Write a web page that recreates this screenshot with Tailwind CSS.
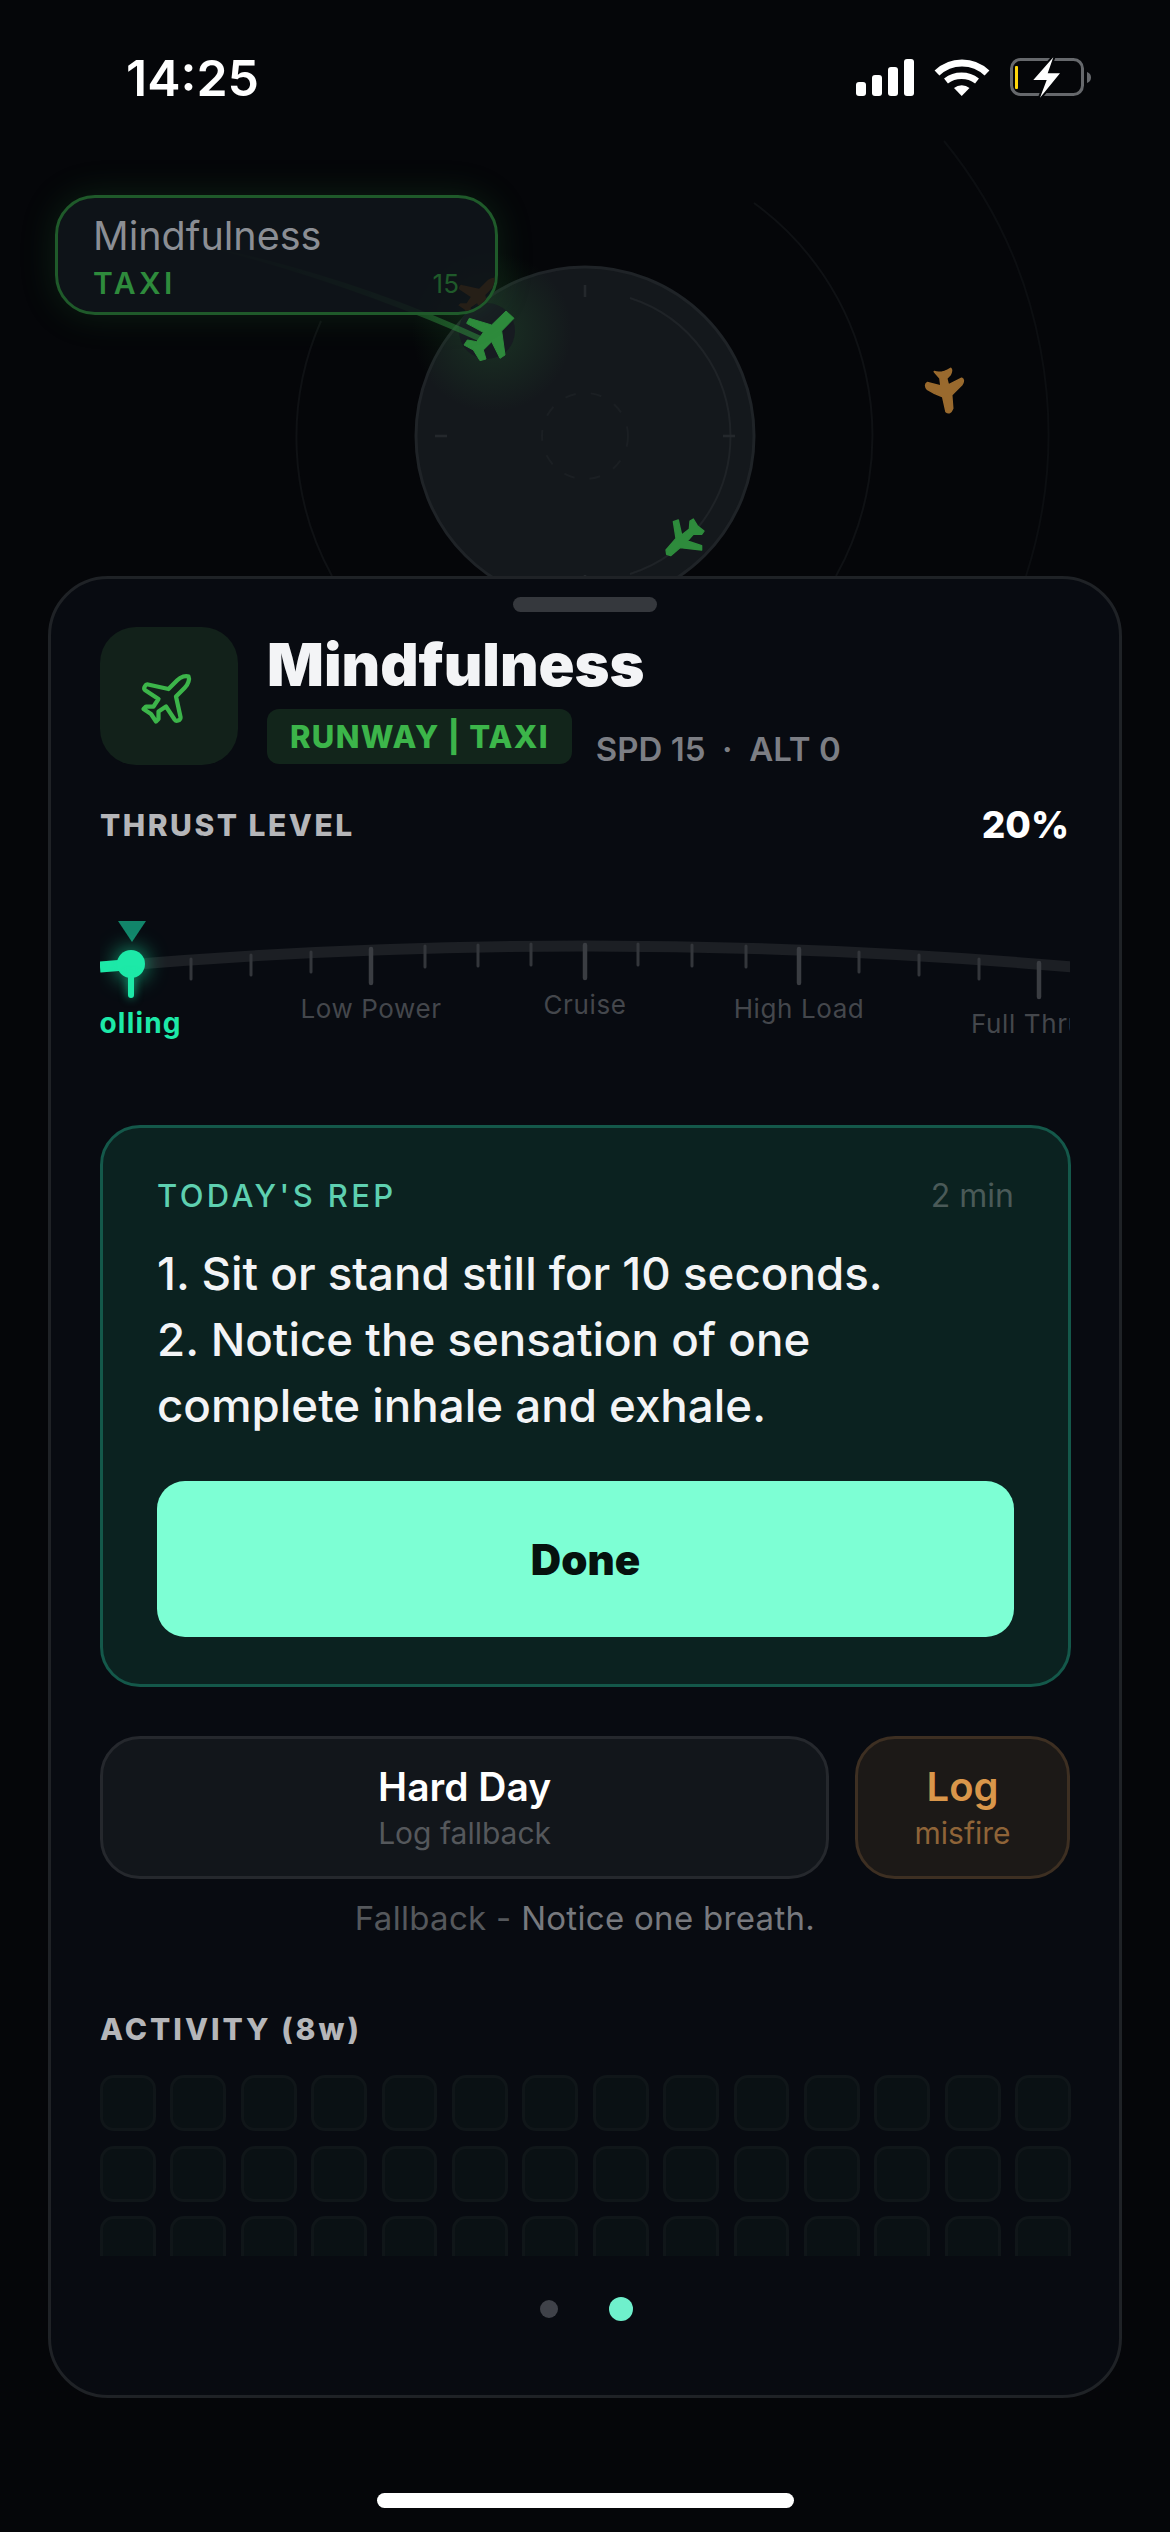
<!DOCTYPE html>
<html lang="en">
<head>
    <meta charset="UTF-8" />
    <meta name="viewport" content="width=device-width, initial-scale=1.0" />
    <script src="https://cdn.jsdelivr.net/npm/@tailwindcss/browser@4"></script>
    <title>Mindfulness</title>
</head>
<body class="bg-[#050609]">
<div class="relative w-[1170px] h-[2532px] overflow-hidden bg-[#050609] font-['Inter',sans-serif] text-white">

    <!-- radar, free canvas -->
    <svg class="absolute left-0 top-0" width="1170" height="600" viewBox="0 0 1170 600" fill="none">
        <defs>
            <radialGradient id="glow">
                <stop offset="0" stop-color="#2e8b3c" stop-opacity="0.22" />
                <stop offset="1" stop-color="#2e8b3c" stop-opacity="0" />
            </radialGradient>
            <linearGradient id="trail" gradientUnits="userSpaceOnUse" x1="490" y1="340" x2="200" y2="245">
                <stop offset="0" stop-color="#2e8b3c" stop-opacity="0.6" />
                <stop offset="1" stop-color="#2e8b3c" stop-opacity="0" />
            </linearGradient>
        </defs>
        <path d="M754 203A288 288 0 0 1 836 576M321 321A288 288 0 0 0 332 576" stroke="#0f1114" stroke-width="2" />
        <path d="M944 141A463 463 0 0 1 1026 576" stroke="#0c0e11" stroke-width="2" />
        <circle cx="585" cy="436" r="169" fill="#14181c" stroke="#1f2327" stroke-width="3" />
        <path d="M630 298a145 145 0 0 1 0 276" stroke="#1f2327" stroke-width="2" />
        <circle cx="585" cy="436" r="43" stroke="#1b1f23" stroke-width="2" stroke-dasharray="11 15" />
        <path d="M585 285v12M585 575v12M435 436h12M723 436h12" stroke="#24282c" stroke-width="2.5" />
        <circle cx="492" cy="332" r="80" fill="url(#glow)" />
        <circle cx="487" cy="331" r="28" fill="#171b21" />
        <path d="M490 340Q350 275 200 245Q350 283 485 344z" fill="url(#trail)" />
        <g transform="translate(450 295) scale(0.3333)" fill="#2e8b3c" stroke="#2e8b3c" stroke-width="3" stroke-linejoin="round">
            <path d="M168 48 192 70 155 108 165 180 150 190 125 140 100 165 108 192 90 197 70 165 42 150 52 135 80 140 100 112 50 85 58 70 125 90z" />
        </g>
        <g transform="translate(900 350) scale(0.3333)" fill="#9a6a2e" stroke="#9a6a2e" stroke-width="5" stroke-linejoin="round">
            <path d="M103 65Q125 72 152 55Q158 60 150 75L140 85L145 105L185 85Q195 90 185 105L155 135L158 175Q150 195 138 185L128 140Q100 130 82 118Q72 105 82 98L123 108L120 85Z" />
        </g>
        <g transform="translate(650 505) scale(0.3333)" fill="#2e8b3c" stroke="#2e8b3c" stroke-width="4" stroke-linejoin="round">
            <path d="M70 50 85 45 95 90 118 72 120 48 130 42 142 62 162 78 155 88 130 88 112 108 155 122 155 135 90 128 62 152 50 148 48 135 78 100z" />
        </g>
    </svg>

    <!-- node label -->
    <div class="absolute left-[55px] top-[195px] w-[443px] h-[120px] rounded-[40px] border-[3px] border-[#1f5a2a] bg-[#10161b]/85 shadow-[0_0_36px_rgba(46,139,60,0.2)]">
        <div class="relative w-full h-full rounded-[37px] overflow-hidden pl-[35px] pt-[12px]">
            <svg class="absolute left-[394px] top-[74px]" width="50" height="50" viewBox="0 0 24 24" fill="#261f17">
                <path d="M17.8 19.2 16 11l3.5-3.5C21 6 21.5 4 21 3c-1-.5-3 0-4.5 1.5L13 8 4.8 6.2c-.5-.1-.9.1-1.1.5l-.3.5c-.2.5-.1 1 .3 1.3L9 12l-2 3H4l-1 1 3 2 2 3 1-1v-3l3-2 3.5 5.3c.3.4.8.5 1.3.3l.5-.2c.4-.3.6-.7.5-1.2z" />
            </svg>
            <div class="text-[39.5px] leading-[52px] text-[#8b8e94]">Mindfulness</div>
            <div class="relative flex items-center justify-between pr-[36px] mt-[1px]">
                <span class="text-[30px] leading-[40px] font-semibold tracking-[3.5px] text-[#2e8b3c]">TAXI</span>
                <span class="text-[26px] text-[#1f5a2a]">15</span>
            </div>
        </div>
    </div>

    <!-- status bar -->
    <div class="absolute left-0 top-0 w-full h-[150px] flex items-start justify-between pl-[126px] pr-[79px] pt-[47px]">
        <span class="text-[50px] leading-[62px] font-semibold">14:25</span>
        <svg class="mt-[11px] overflow-visible" width="235" height="42" viewBox="0 0 235 42" fill="none">
            <rect x="0" y="24" width="10" height="14" rx="3" fill="#fff" />
            <rect x="16" y="17" width="10" height="21" rx="3" fill="#fff" />
            <rect x="32" y="9" width="10" height="29" rx="3" fill="#fff" />
            <rect x="48" y="1" width="10" height="37" rx="3" fill="#fff" />
            <path d="M81 15A36 36 0 0 1 131 15" stroke="#fff" stroke-width="7" />
            <path d="M90 23A26 26 0 0 1 121 23" stroke="#fff" stroke-width="6.5" />
            <path d="M105.7 38 98 30A12 12 0 0 1 113.5 30z" fill="#fff" />
            <rect x="155.5" y="1.5" width="71" height="35" rx="9" stroke="#66686c" stroke-width="3" />
            <rect x="159" y="8" width="3" height="23" rx="1" fill="#ffd60a" />
            <path d="M231 14c3 1 4 3 4 5.500s-1 4.500-4 5.500z" fill="#66686c" />
            <path d="M197.300 -.7 177.300 22H190.700L184 39.700 204 15.300H191.700z" fill="#fff" stroke="#050609" stroke-width="4" paint-order="stroke" stroke-linejoin="round" />
        </svg>
    </div>

    <!-- bottom sheet -->
    <div class="absolute left-[48px] top-[576px] w-[1074px] h-[1822px] rounded-[60px] border-[3px] border-[#1f2226] bg-[#080b11] px-[49px] pt-[18px]">
        <div class="mx-auto w-[144px] h-[15px] rounded-full bg-[#35383d]"></div>

        <div class="flex gap-[29px] mt-[15px]">
            <div class="w-[138px] h-[138px] rounded-[36px] bg-[#12211a] flex items-center justify-center pr-[6px] pt-[6px]">
                <svg width="60" height="60" viewBox="0 0 24 24" fill="none" stroke="#3cb54a" stroke-width="1.7" stroke-linejoin="round" stroke-linecap="round">
                    <path d="M17.8 19.2 16 11l3.5-3.5C21 6 21.5 4 21 3c-1-.5-3 0-4.5 1.5L13 8 4.8 6.2c-.5-.1-.9.1-1.1.5l-.3.5c-.2.5-.1 1 .3 1.3L9 12l-2 3H4l-1 1 3 2 2 3 1-1v-3l3-2 3.5 5.3c.3.4.8.5 1.3.3l.5-.2c.4-.3.6-.7.5-1.2z" />
                </svg>
            </div>
            <div>
                <h1 class="text-[59.5px] leading-[72px] font-black text-[#f3f4f6] mt-[1px]">Mindfulness</h1>
                <div class="flex items-end gap-[24px] mt-[9px]">
                    <span class="h-[55px] px-[23px] rounded-[12px] bg-[#12251b] text-[#3cb54a] text-[31px] font-extrabold tracking-[1.3px] leading-[55px]">RUNWAY | TAXI</span>
                    <span class="text-[#7c7e84] text-[33px] font-semibold leading-[38px] -mb-[4px]">SPD 15 &nbsp;·&nbsp; ALT 0</span>
                </div>
            </div>
        </div>

        <div class="flex items-center justify-between mt-[40px]">
            <span class="text-[30px] leading-[40px] font-extrabold tracking-[2.5px] text-[#b5b6b9]">THRUST LEVEL</span>
            <span class="text-[37px] leading-[40px] font-extrabold text-white pr-[1px]">20%</span>
        </div>

        <!-- thrust dial -->
        <div class="relative h-[150px] mt-[73px] overflow-hidden">
            <svg class="absolute left-0 top-0" width="972" height="120" viewBox="100 918 972 120" fill="none">
                <path d="M100 967Q586 925 1072 967" stroke="#1c1f24" stroke-width="11" />
                <path d="M100 967 131 964.400" stroke="#1de9a8" stroke-width="11" />
                <g stroke="#33363b" stroke-width="3" stroke-linecap="round">
                    <path d="M191 959v20M251 955v20M311 952v20M425 946v21M478 945v21M531 944v21M638 944v21M692 945v21M746 946v21M859 952v20M919 955v20M979 959v20" />
                </g>
                <g stroke="#3a3d42" stroke-width="4.5" stroke-linecap="round">
                    <path d="M371 949v34M585 945v33M799 949v34M1039 963v34" />
                </g>
                <path d="M118 921h28l-14 21z" fill="#12856a" />
            </svg>
            <div class="absolute left-[17px] top-[32px] w-[28px] h-[28px] rounded-full bg-[#1de9a8] shadow-[0_0_22px_rgba(29,233,168,0.8)]"></div>
            <div class="absolute left-[28px] top-[57px] w-[6px] h-[23px] rounded-full bg-[#1de9a8] shadow-[0_0_10px_rgba(29,233,168,0.7)]"></div>
            <span class="absolute left-[31px] top-[88px] -translate-x-1/2 whitespace-nowrap text-[28px] leading-[34px] font-bold tracking-[1.2px] text-[#1de9a8]">Rolling</span>
            <span class="absolute left-[271px] top-[74px] -translate-x-1/2 whitespace-nowrap text-[26px] leading-[34px] tracking-[0.6px] text-[#44474c]">Low Power</span>
            <span class="absolute left-[485px] top-[70px] -translate-x-1/2 whitespace-nowrap text-[26px] leading-[34px] tracking-[0.6px] text-[#44474c]">Cruise</span>
            <span class="absolute left-[699px] top-[74px] -translate-x-1/2 whitespace-nowrap text-[26px] leading-[34px] tracking-[0.6px] text-[#44474c]">High Load</span>
            <span class="absolute left-[939px] top-[89px] -translate-x-1/2 whitespace-nowrap text-[26px] leading-[34px] tracking-[0.6px] text-[#44474c]">Full Thrust</span>
        </div>

        <!-- today's rep -->
        <div class="mt-[57px] w-[971px] h-[562px] rounded-[40px] border-[3px] border-[#14584a] bg-[#0b2220] px-[54px] pt-[48px]">
            <div class="flex items-center justify-between">
                <span class="text-[31px] leading-[40px] font-medium tracking-[3.4px] text-[#5ed0b0]">TODAY'S REP</span>
                <span class="text-[32px] leading-[40px] text-[#4a5a58]">2 min</span>
            </div>
            <p class="mt-[25px] text-[45.7px] leading-[66px] font-[550] text-[#f3f4f6]">1. Sit or stand still for 10 seconds.<br />2. Notice the sensation of one<br />complete inhale and exhale.</p>
            <button class="mt-[42px] w-full h-[156px] rounded-[28px] bg-[#7dffd4] text-[42px] font-black text-[#06120e]">Done</button>
        </div>

        <div class="flex gap-[26px] mt-[49px]">
            <div class="w-[730px] h-[143px] rounded-[40px] border-[3px] border-[#25282d] bg-[#12161b] flex flex-col items-center justify-center">
                <span class="text-[39px] leading-[50px] font-semibold text-white">Hard Day</span>
                <span class="text-[30px] leading-[42px] text-[#55585c]">Log fallback</span>
            </div>
            <div class="w-[215px] h-[143px] rounded-[40px] border-[3px] border-[#3d2f22] bg-[#1c1917] flex flex-col items-center justify-center">
                <span class="text-[40px] leading-[50px] font-semibold text-[#d9964a]">Log</span>
                <span class="text-[30px] leading-[42px] text-[#8f6438]">misfire</span>
            </div>
        </div>
        <p class="mt-[18px] text-center text-[33px] leading-[42px] tracking-[0.3px] text-[#55585c]">Fallback - <span class="text-[#77797e]">Notice one breath.</span></p>

        <div class="mt-[70px] text-[30px] leading-[40px] font-extrabold tracking-[3px] text-[#b5b6b9]">ACTIVITY (8w)</div>

        <!-- activity grid -->
        <div class="mt-[26px] h-[181px] w-[971px] overflow-hidden grid grid-cols-14 gap-x-[14.5px] gap-y-[14.5px] auto-rows-[56px]" id="grid"></div>

        <div class="mt-[41px] flex items-center justify-center gap-[51px] pl-[3px]">
            <span class="w-[18px] h-[18px] rounded-full bg-[#3f4249]"></span>
            <span class="w-[24px] h-[24px] rounded-full bg-[#6ff0cc]"></span>
        </div>
    </div>

    <div class="absolute left-[377px] top-[2493px] w-[417px] h-[15px] rounded-full bg-white"></div>
</div>
<script>
    const grid = document.getElementById("grid");
    for (let i = 0; i < 42; i++) {
        const cell = document.createElement("div");
        cell.className = "rounded-[14px] border-[3px] border-[#101619] bg-[#0a1114]";
        grid.appendChild(cell);
    }
</script>
</body>
</html>
